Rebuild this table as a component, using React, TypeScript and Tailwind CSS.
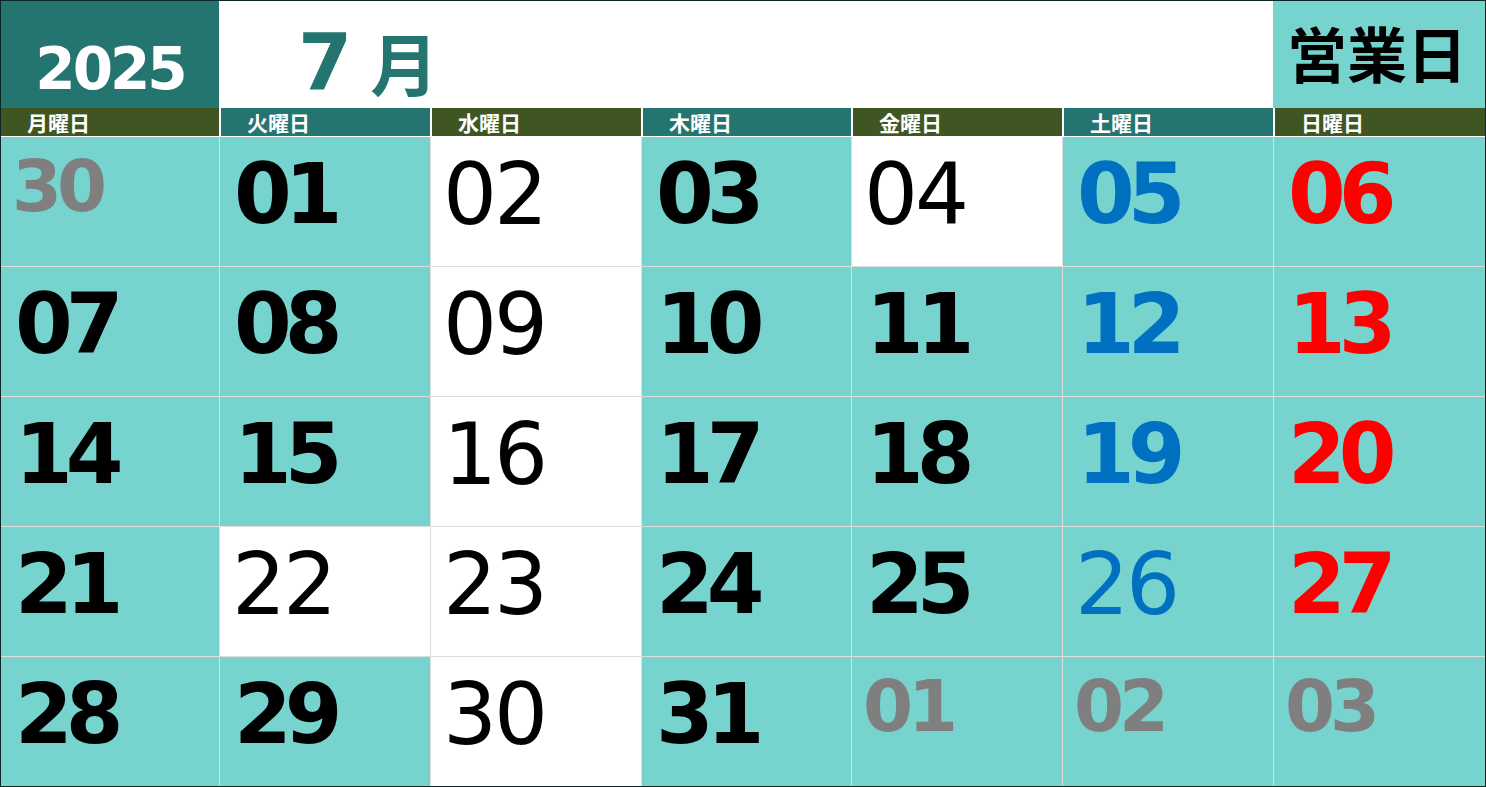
import React from "react";

type Cell = { n: string; kind: "b" | "r" | "g"; color?: string; bg: "t" | "w" };

const T = "t" as const;
const W = "w" as const;

const rows: Cell[][] = [
  [
    { n: "30", kind: "g", bg: T },
    { n: "01", kind: "b", bg: T },
    { n: "02", kind: "r", bg: W },
    { n: "03", kind: "b", bg: T },
    { n: "04", kind: "r", bg: W },
    { n: "05", kind: "b", color: "blue", bg: T },
    { n: "06", kind: "b", color: "red", bg: T },
  ],
  [
    { n: "07", kind: "b", bg: T },
    { n: "08", kind: "b", bg: T },
    { n: "09", kind: "r", bg: W },
    { n: "10", kind: "b", bg: T },
    { n: "11", kind: "b", bg: T },
    { n: "12", kind: "b", color: "blue", bg: T },
    { n: "13", kind: "b", color: "red", bg: T },
  ],
  [
    { n: "14", kind: "b", bg: T },
    { n: "15", kind: "b", bg: T },
    { n: "16", kind: "r", bg: W },
    { n: "17", kind: "b", bg: T },
    { n: "18", kind: "b", bg: T },
    { n: "19", kind: "b", color: "blue", bg: T },
    { n: "20", kind: "b", color: "red", bg: T },
  ],
  [
    { n: "21", kind: "b", bg: T },
    { n: "22", kind: "r", bg: W },
    { n: "23", kind: "r", bg: W },
    { n: "24", kind: "b", bg: T },
    { n: "25", kind: "b", bg: T },
    { n: "26", kind: "r", color: "blue", bg: T },
    { n: "27", kind: "b", color: "red", bg: T },
  ],
  [
    { n: "28", kind: "b", bg: T },
    { n: "29", kind: "b", bg: T },
    { n: "30", kind: "r", bg: W },
    { n: "31", kind: "b", bg: T },
    { n: "01", kind: "g", bg: T },
    { n: "02", kind: "g", bg: T },
    { n: "03", kind: "g", bg: T },
  ],
];

const headers: { label: string; dark: boolean }[] = [
  { label: "月曜日", dark: false },
  { label: "火曜日", dark: true },
  { label: "水曜日", dark: false },
  { label: "木曜日", dark: true },
  { label: "金曜日", dark: false },
  { label: "土曜日", dark: true },
  { label: "日曜日", dark: false },
];

const cols = "grid grid-cols-[218px_210px_210px_209px_210px_210px_1fr]";

function DayCell({ c }: { c: Cell }) {
  const bg = c.bg === "t" ? "bg-[#76d3ce]" : "bg-white";
  let color = "text-black";
  if (c.color === "blue") color = "text-[#0070c0]";
  if (c.color === "red") color = "text-[#ff0000]";
  if (c.kind === "g") color = "text-[#7f7f7f]";
  let cls = "";
  if (c.kind === "b") cls = "font-bold text-[83px] leading-[83px] pt-[16px] pl-[14px] tracking-[-7px]";
  if (c.kind === "r") cls = "font-normal text-[85px] leading-[85px] pt-[15px] pl-[12px] tracking-[-3px]";
  if (c.kind === "g") cls = "font-bold text-[72px] leading-[72px] pt-[13px] pl-[11px] tracking-[-5px]";
  return (
    <div className={`${bg} overflow-hidden`}>
      <div className={`${cls} ${color} font-['DejaVu_Sans',sans-serif]`}>{c.n}</div>
    </div>
  );
}

export default function App() {
  return (
    <div className="w-[1486px] h-[787px] border border-[#0b2624] bg-white flex flex-col overflow-hidden">
      {/* Title header */}
      <div className="flex h-[107px] shrink-0">
        <div className="w-[218px] bg-[#247570] flex items-end justify-center pb-[10px]">
          <span className="text-white font-bold text-[58px] leading-[58px] tracking-[-3px] font-['DejaVu_Sans',sans-serif]">
            2025
          </span>
        </div>
        <div className="flex-1 flex items-center pl-[79px] pt-[14px] text-[#247570] font-bold">
          <span className="text-[78px] leading-none font-['DejaVu_Sans',sans-serif]">7</span>
          <span className="ml-[18px] text-[68px] leading-none font-['Noto_Sans_CJK_JP',sans-serif]">月</span>
        </div>
        <div className="w-[212px] bg-[#76d3ce] flex items-center justify-center pr-[4px] pb-[6px]">
          <span className="text-black font-bold text-[60px] leading-none font-['Noto_Sans_CJK_JP',sans-serif]">
            営業日
          </span>
        </div>
      </div>
      {/* Weekday header */}
      <div className={`${cols} gap-px h-[28px] shrink-0 bg-white`}>
        {headers.map((h, i) => (
          <div key={h.label} className={`${i === 0 ? "" : "border-l border-white"} flex`}>
            <div
              className={`${h.dark ? "bg-[#247570]" : "bg-[#3f5623]"} flex-1 flex items-center pl-[26px] text-white font-bold text-[21px] leading-none font-['Noto_Sans_CJK_JP',sans-serif]`}
            >
              {h.label}
            </div>
          </div>
        ))}
      </div>
      <div className="h-px bg-white shrink-0" />
      {/* Day grid */}
      <div className={`${cols} grid-rows-5 gap-px flex-1 bg-[#dedede]`}>
        {rows.flat().map((c, i) => (
          <DayCell key={i} c={c} />
        ))}
      </div>
    </div>
  );
}
